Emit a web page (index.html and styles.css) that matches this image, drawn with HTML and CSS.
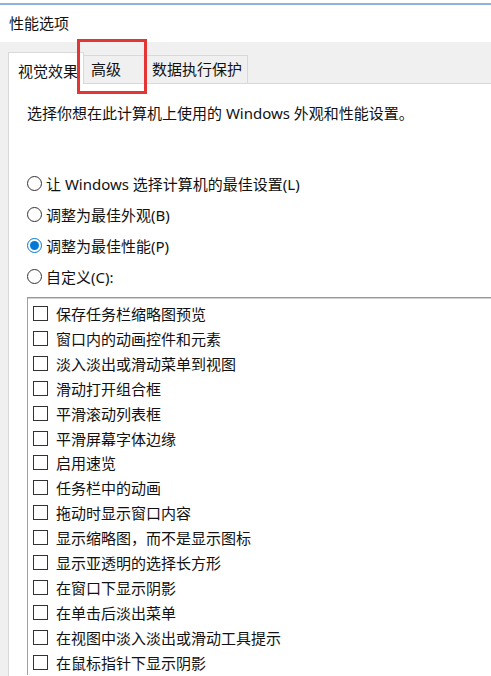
FILE: index.html
```html
<!DOCTYPE html>
<html lang="zh-CN">
<head>
<meta charset="utf-8">
<title>性能选项</title>
<link rel="stylesheet" href="styles.css">
</head>
<body>
<div class="window">
  <div class="titlebar">
    <div class="frame-line"></div>
    <div class="title">性能选项</div>
  </div>
  <div class="body">
    <div class="tabs">
      <div class="tab tab-active tab-visual">视觉效果</div>
      <div class="tab tab-adv">高级</div>
      <div class="tab tab-dep">数据执行保护</div>
    </div>
    <div class="highlight"></div>
    <div class="panel">
      <p class="desc">选择你想在此计算机上使用的 Windows 外观和性能设置。</p>
      <div class="radios">
        <div class="radio-row"><span class="radio"></span><span>让 Windows 选择计算机的最佳设置(L)</span></div>
        <div class="radio-row"><span class="radio"></span><span>调整为最佳外观(B)</span></div>
        <div class="radio-row"><span class="radio radio-on"></span><span>调整为最佳性能(P)</span></div>
        <div class="radio-row"><span class="radio"></span><span>自定义(C):</span></div>
      </div>
      <div class="list">
        <div class="item"><span class="box"></span><span>保存任务栏缩略图预览</span></div>
        <div class="item"><span class="box"></span><span>窗口内的动画控件和元素</span></div>
        <div class="item"><span class="box"></span><span>淡入淡出或滑动菜单到视图</span></div>
        <div class="item"><span class="box"></span><span>滑动打开组合框</span></div>
        <div class="item"><span class="box"></span><span>平滑滚动列表框</span></div>
        <div class="item"><span class="box"></span><span>平滑屏幕字体边缘</span></div>
        <div class="item"><span class="box"></span><span>启用速览</span></div>
        <div class="item"><span class="box"></span><span>任务栏中的动画</span></div>
        <div class="item"><span class="box"></span><span>拖动时显示窗口内容</span></div>
        <div class="item"><span class="box"></span><span>显示缩略图，而不是显示图标</span></div>
        <div class="item"><span class="box"></span><span>显示亚透明的选择长方形</span></div>
        <div class="item"><span class="box"></span><span>在窗口下显示阴影</span></div>
        <div class="item"><span class="box"></span><span>在单击后淡出菜单</span></div>
        <div class="item"><span class="box"></span><span>在视图中淡入淡出或滑动工具提示</span></div>
        <div class="item"><span class="box"></span><span>在鼠标指针下显示阴影</span></div>
      </div>
    </div>
  </div>
</div>
</body>
</html>
```
FILE: styles.css
```css
html, body {
  margin: 0;
  padding: 0;
  overflow: hidden;
  background: #f0f0f0;
}
body {
  width: 491px;
  height: 676px;
  font-family: "Noto Sans", "Noto Sans CJK SC", sans-serif;
  font-size: 15px;
  color: #111111;
}
.window {
  position: relative;
  width: 491px;
  height: 676px;
  overflow: hidden;
}
.titlebar {
  height: 42px;
  background: #ffffff;
  box-sizing: border-box;
  padding-top: 3px;
}
.frame-line {
  height: 2px;
  background: #8fb3d9;
}
.title {
  padding-left: 9px;
  margin-top: 8px;
  line-height: 20px;
}
.body {
  padding-top: 10px;
  padding-left: 8px;
  background: #f0f0f0;
}
.tabs {
  display: flex;
  align-items: flex-end;
  height: 31px;
}
.tab {
  box-sizing: border-box;
  height: 28px;
  line-height: 26px;
  border: 1px solid #d9d9d9;
  border-bottom: none;
  background: #f0f0f0;
  white-space: nowrap;
}
.tab-active {
  position: relative;
  z-index: 2;
  height: 32px;
  margin-bottom: -1px;
  line-height: 36px;
  background: #ffffff;
  padding-left: 9px;
  width: 76px;
}
.tab-adv {
  width: 62px;
  padding-left: 7px;
  border-left: none;
}
.tab-dep {
  width: 101px;
  padding-left: 5px;
  border-left: none;
  margin-left: 1px;
}
.highlight {
  position: absolute;
  left: 77px;
  top: 39px;
  width: 64px;
  height: 49px;
  border: 3px solid #e43535;
  z-index: 5;
}
.panel {
  background: #ffffff;
  border-top: 1px solid #d9d9d9;
  border-left: 1px solid #d9d9d9;
  margin-right: -20px;
  padding-left: 18px;
  padding-top: 19px;
  height: 700px;
}
.desc {
  margin: 0;
  line-height: 20px;
}
.radios {
  margin-top: 45px;
}
.radio-row {
  display: flex;
  align-items: center;
  height: 31px;
}
.radio {
  box-sizing: border-box;
  width: 15px;
  height: 15px;
  border: 1px solid #333333;
  border-radius: 50%;
  margin-right: 4px;
  display: flex;
  align-items: center;
  justify-content: center;
}
.radio-on {
  border-color: #0078d7;
}
.radio-on::after {
  content: "";
  width: 9px;
  height: 9px;
  border-radius: 50%;
  background: #0078d7;
}
.list {
  margin-top: 5px;
  border-top: 1px solid #9a9a9a;
  border-left: 1px solid #a0a0a0;
  box-shadow: inset 0 1px 0 #cfcfcf;
  padding-top: 3px;
  padding-left: 5px;
}
.item {
  display: flex;
  align-items: center;
  height: 24.93px;
}
.box {
  box-sizing: border-box;
  width: 15px;
  height: 15px;
  border: 1px solid #333333;
  margin-right: 8px;
  background: #ffffff;
}
```
